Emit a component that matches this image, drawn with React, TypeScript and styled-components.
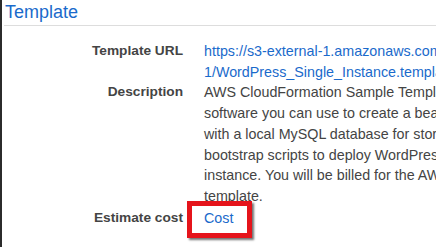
import React from 'react'
import styled, { createGlobalStyle } from 'styled-components'

const GlobalStyle = createGlobalStyle`
  html, body {
    margin: 0;
    padding: 0;
    background: #fff;
  }
  body {
    font-family: 'Liberation Sans', Arial, sans-serif;
  }
`

const Page = styled.div`
  width: 434px;
  height: 247px;
  overflow: hidden;
  border-left: 2px solid #2b2b2b;
  background: #fff;
`

const Header = styled.div`
  margin-left: 2px;
  height: 25px;
  border-bottom: 1px solid #dddddd;
`

const Title = styled.h2`
  margin: 0;
  padding: 1px 0 0 1px;
  font-size: 18px;
  line-height: 22px;
  font-weight: normal;
  color: #1a6acb;
`

const Details = styled.div`
  display: grid;
  grid-template-columns: 181px 720px;
  column-gap: 21px;
  padding-top: 15px;
  line-height: 20.7px;
`

const Label = styled.div<{ $gap?: number }>`
  text-align: right;
  font-size: 13.7px;
  font-weight: bold;
  color: #444;
  margin-top: ${(p) => p.$gap ?? 0}px;
`

const Value = styled.div<{ $gap?: number }>`
  font-size: 14.3px;
  color: #444;
  white-space: nowrap;
  margin-top: ${(p) => p.$gap ?? 0}px;
`

const Line = styled.span`
  display: block;
`

const Link = styled.a`
  color: #1a6acb;
  text-decoration: none;
`

const Highlighted = styled.span`
  position: relative;
  display: inline-block;

  &::after {
    content: '';
    position: absolute;
    top: -7px;
    bottom: -10px;
    left: -17px;
    right: -19px;
    border: 5px solid #e5141b;
    box-shadow: 2px 2px 2px rgba(0, 0, 0, 0.55);
  }
`

const descriptionLines = [
  'AWS CloudFormation Sample Template WordPress_Single_Instance: WordPress is web',
  'software you can use to create a beautiful website or blog. This template installs WordPress',
  'with a local MySQL database for storage. It demonstrates using the AWS CloudFormation',
  'bootstrap scripts to deploy WordPress. **WARNING** This template creates an Amazon EC2',
  'instance. You will be billed for the AWS resources used if you create a stack from this',
  'template.',
]

export default function App() {
  return (
    <>
      <GlobalStyle />
      <Page>
        <Header>
          <Title>Template</Title>
        </Header>
        <Details>
          <Label>Template URL</Label>
          <Value>
            <Link href="#">
              <Line>https://s3-external-1.amazonaws.com/cloudformation-templates-us-east-</Line>
              <Line>1/WordPress_Single_Instance.template</Line>
            </Link>
          </Value>

          <Label>Description</Label>
          <Value>
            {descriptionLines.map((l) => (
              <Line key={l}>{l}</Line>
            ))}
          </Value>

          <Label $gap={1}>Estimate cost</Label>
          <Value $gap={1}>
            <Highlighted>
              <Link href="#">Cost</Link>
            </Highlighted>
          </Value>
        </Details>
      </Page>
    </>
  )
}
